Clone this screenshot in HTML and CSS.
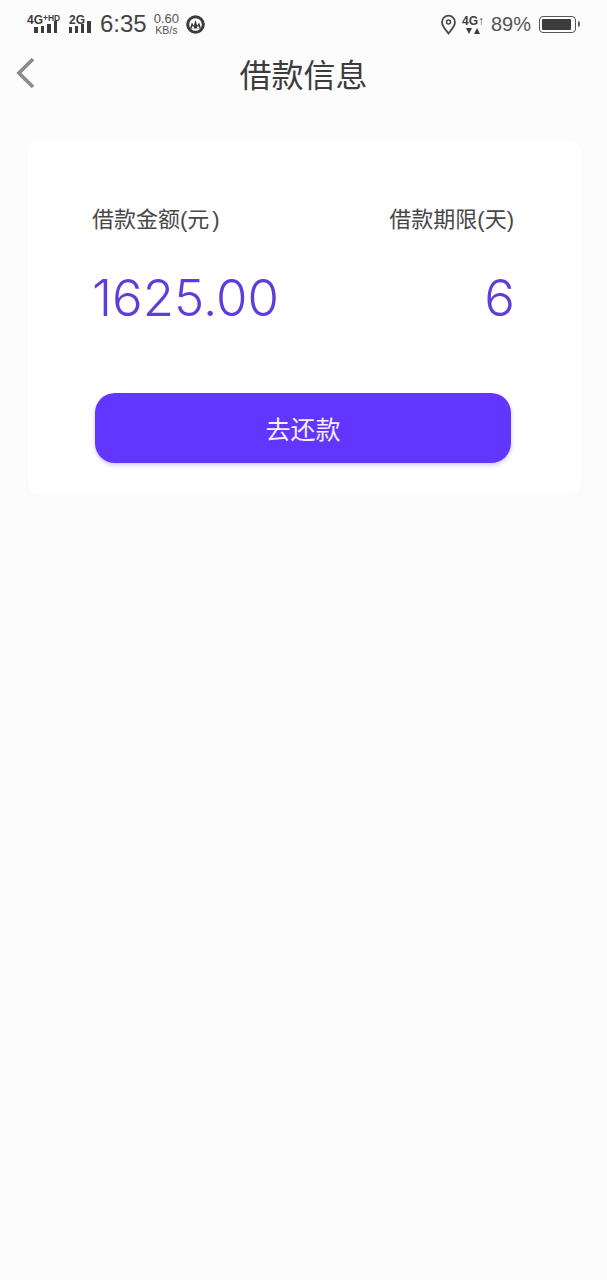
FILE: index.html
```html
<!DOCTYPE html>
<html lang="zh-CN">
<head>
  <meta charset="UTF-8" />
  <meta name="viewport" content="width=device-width, initial-scale=1.0"/>
  <title>借款信息</title>
  <link rel="stylesheet" href="styles.css">
</head>
<body>
  <!-- status bar -->
  <div class="status-bar">
    <div class="status-left">
      <div class="signal">
        <span class="net">4G<sup>+HD</sup></span>
        <svg class="bars" width="25" height="12" viewBox="0 0 25 12"><path d="M1 6h4v6H1zM8 5h3v7H8zM14 3h4v9h-4zM21 0h3v12h-3z" fill="#3c3c3c"/></svg>
      </div>
      <div class="signal signal-2g">
        <span class="net">2G</span>
        <svg class="bars" width="24" height="12" viewBox="0 0 24 12"><path d="M0 6h3v6H0zM6 5h3v7H6zM12 3h3v9h-3zM18 0h4v12h-4z" fill="#3c3c3c"/></svg>
      </div>
      <span class="time">6:35</span>
      <div class="speed"><span>0.60</span><span class="unit">KB/s</span></div>
      <svg class="app-icon" width="19" height="19" viewBox="0 0 19 19">
        <circle cx="9.500" cy="9.500" r="7.800" fill="#fff" stroke="#3c3c3c" stroke-width="3"/>
        <path d="M4 13.500l1.800-6 2 3L9.500 5l1.700 5.500 2-3 1.800 6z" fill="#3c3c3c"/>
        <rect x="6" y="11.500" width="2" height="2" fill="#fff"/>
        <rect x="11" y="11.500" width="2" height="2" fill="#fff"/>
      </svg>
    </div>
    <div class="status-right">
      <svg width="17" height="21" viewBox="0 0 17 21"><path d="M8.500 19.500C5 15 2 12 2 8.200a6.500 6.500 0 0 1 13 0C15 12 12 15 8.500 19.500z" fill="none" stroke="#4a4a4a" stroke-width="1.800"/><circle cx="8.500" cy="8" r="2" fill="none" stroke="#4a4a4a" stroke-width="1.500"/></svg>
      <div class="net-4g">
        <span class="net-small">4G↑</span>
        <svg width="14" height="6" viewBox="0 0 14 6"><path d="M0 0h6L3 6zM8 6l3-6 3 6z" fill="#3c3c3c"/></svg>
      </div>
      <span class="battery-text">89%</span>
      <div class="battery"><div class="battery-level"></div></div>
    </div>
  </div>

  <div class="nav">
    <svg class="back" width="22" height="34" viewBox="0 0 22 34"><path d="M18 3L4 17l14 14" fill="none" stroke="#8c8c8c" stroke-width="3.800"/></svg>
    <h1>借款信息</h1>
  </div>

  <div class="card">
    <div class="info-row labels">
      <span>借款金额(元<span class="paren-gap">)</span></span>
      <span>借款期限(天)</span>
    </div>
    <div class="info-row values">
      <span>1625.00</span>
      <span>6</span>
    </div>
    <button class="repay">去还款</button>
  </div>
</body>
</html>
```

FILE: styles.css
```css
body {
  margin: 0;
  background-color: #fcfcfc;
  font-family: "Liberation Sans", "Noto Sans CJK SC", sans-serif;
  color: #3c3c3c;
  min-height: 1280px;
}

.status-bar {
  height: 48px;
  padding: 0 27px;
  display: flex;
  justify-content: space-between;
  align-items: center;
}

.status-left {
  display: flex;
  align-items: center;
}

.status-right {
  display: flex;
  align-items: center;
}

.signal {
  position: relative;
  width: 31px;
  height: 19px;
}

.signal-2g {
  width: 24px;
  margin-left: 11px;
}

.signal .bars {
  position: absolute;
  right: 0;
  bottom: 1px;
}

.net {
  position: absolute;
  left: 0;
  top: -1px;
  font-size: 12px;
  font-weight: bold;
  line-height: 12px;
  white-space: nowrap;
}

.net sup {
  font-size: 8.500px;
  line-height: 7px;
  vertical-align: 3px;
}

.time {
  font-size: 24px;
  margin-left: 7px;
  color: #444;
}

.speed {
  display: flex;
  flex-direction: column;
  align-items: center;
  font-size: 13px;
  line-height: 12px;
  margin-left: 7px;
  color: #555;
}

.speed .unit {
  font-size: 10.500px;
  line-height: 10px;
}

.app-icon {
  margin-left: 7px;
}

.net-4g {
  display: flex;
  flex-direction: column;
  align-items: center;
  margin-left: 5px;
}

.net-small {
  font-size: 12px;
  font-weight: bold;
  line-height: 13px;
}

.battery-text {
  font-size: 20px;
  margin-left: 7px;
  color: #555;
}

.battery {
  width: 37px;
  height: 17px;
  margin: 0 4px 0 8px;
  padding: 2px;
  box-sizing: border-box;
  border: 1.500px solid #555;
  border-radius: 4px;
  position: relative;
}

.battery::after {
  content: "";
  position: absolute;
  right: -5px;
  top: 4px;
  width: 2px;
  height: 6px;
  background: #666;
  border-radius: 0 2px 2px 0;
}

.battery-level {
  width: 92%;
  height: 100%;
  background: #3c3c3c;
  border-radius: 1px;
}

.nav {
  position: relative;
  height: 52px;
  display: flex;
  justify-content: center;
  align-items: center;
  padding-bottom: 2px;
  box-sizing: border-box;
}

.nav h1 {
  margin: 0;
  font-size: 32px;
  font-weight: normal;
  color: #3c3c3c;
}

.back {
  position: absolute;
  left: 15px;
  top: 8px;
}

.card {
  margin: 40px 26px 0 28px;
  padding: 65px 66px 32px 64px;
  height: 355px;
  box-sizing: border-box;
  background: #fff;
  border-radius: 12px;
  box-shadow: 0 0 8px rgba(0, 0, 0, 0.015);
}

.info-row {
  display: flex;
  justify-content: space-between;
}

.labels {
  font-size: 22px;
  line-height: 30px;
  color: #474747;
  padding-right: 1px;
}

.paren-gap {
  margin-left: 3px;
}

.values {
  margin-top: 33px;
  font-family: "Inter", "Liberation Sans", sans-serif;
  font-size: 51px;
  font-weight: 340;
  line-height: 60px;
  color: #5f3dd8;
}

.repay {
  display: block;
  width: 416px;
  height: 70px;
  margin: 65px 0 0 3px;
  padding-bottom: 2px;
  border: none;
  border-radius: 20px;
  background-color: #6236ff;
  color: #f4f0ff;
  font-family: inherit;
  font-size: 25px;
  box-shadow: 0 2px 4px rgba(98, 54, 255, 0.3);
}
```
